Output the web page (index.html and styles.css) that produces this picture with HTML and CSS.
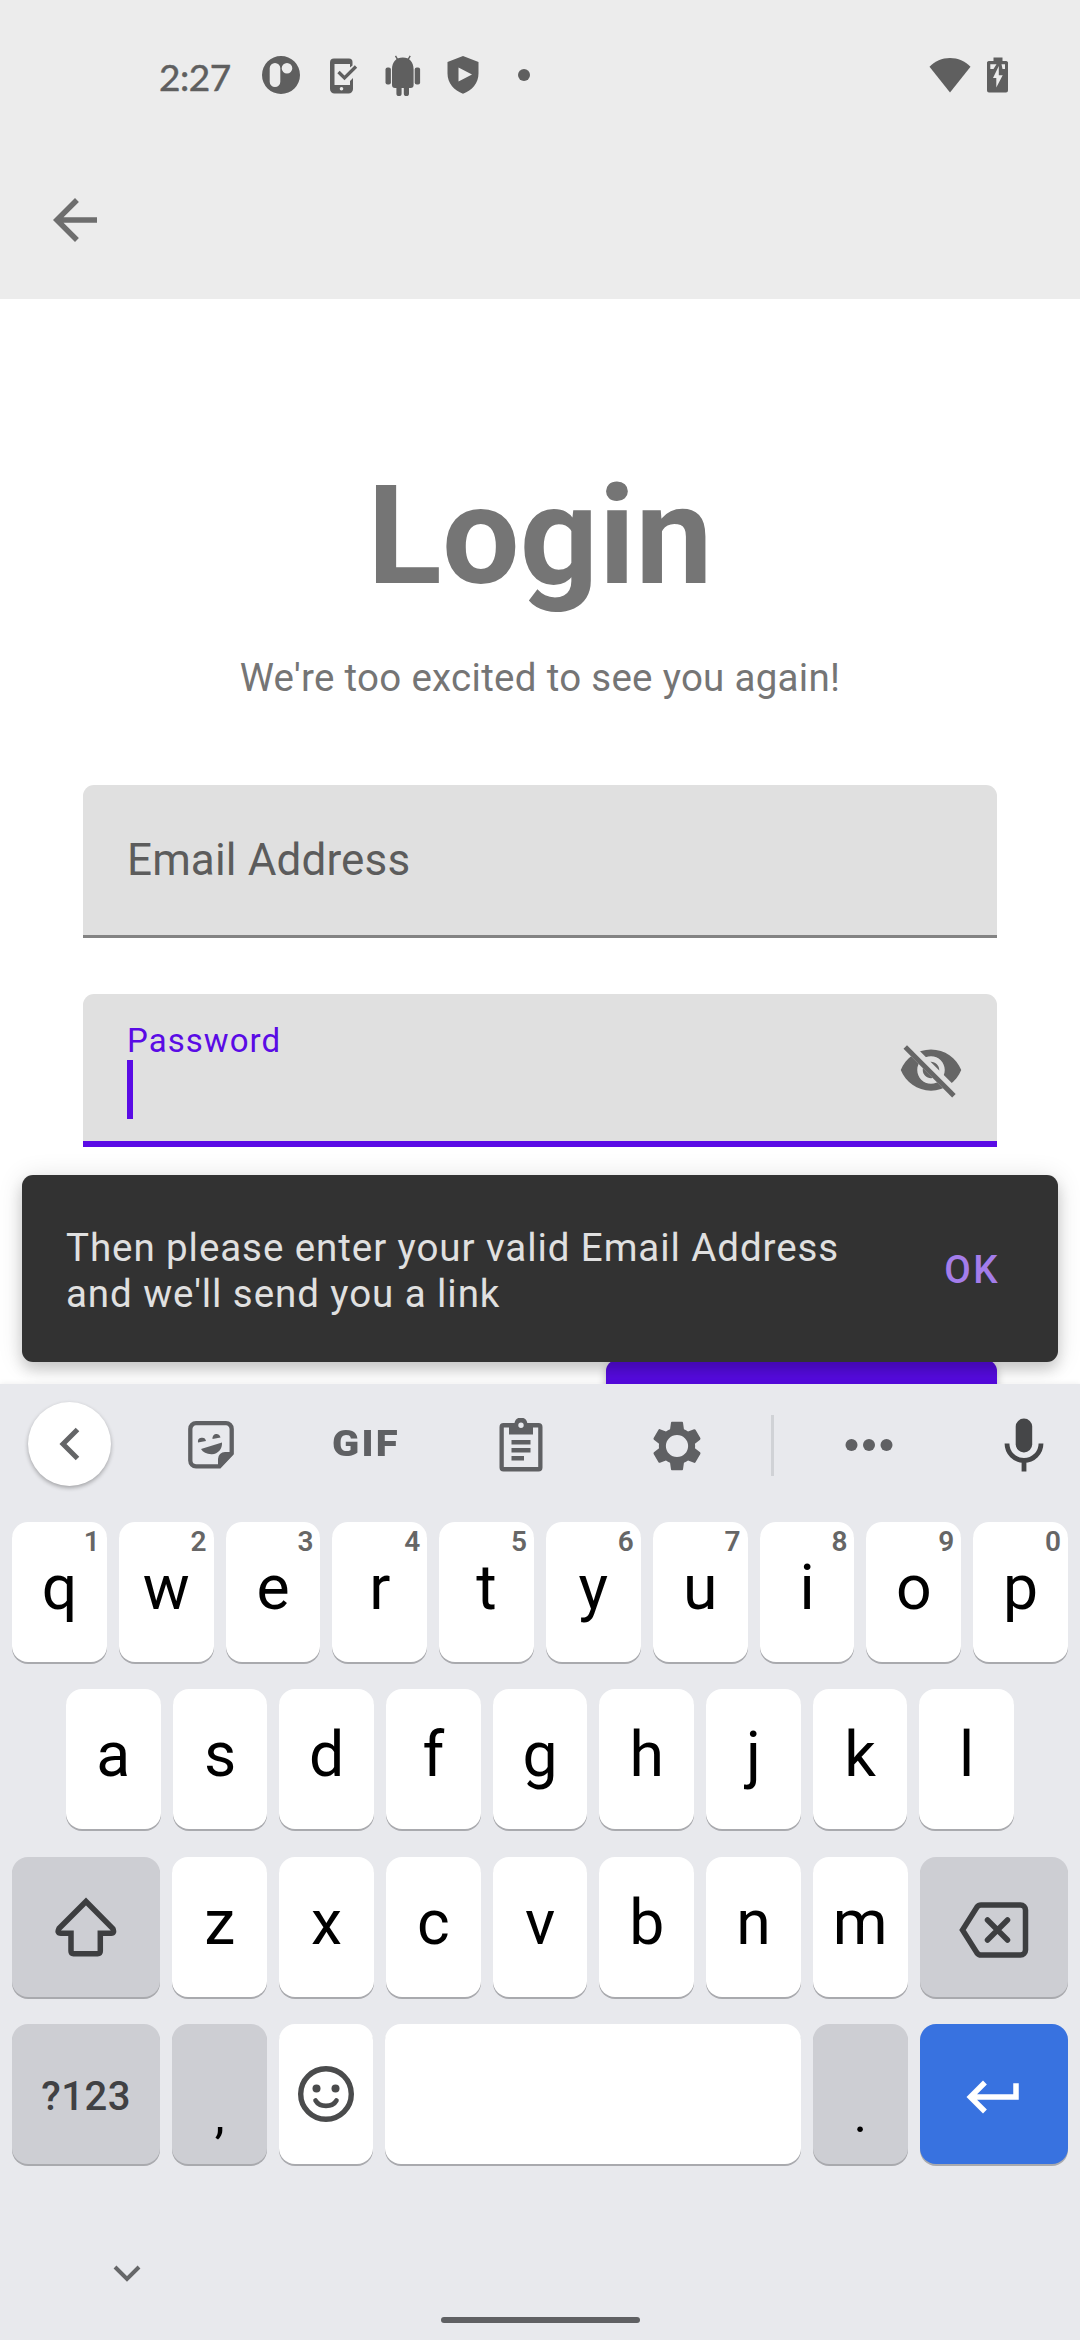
FILE: index.html
```html
<!DOCTYPE html>
<html lang="en">
<head>
<meta charset="utf-8">
<title>Login</title>
<link rel="stylesheet" href="styles.css">
</head>
<body>
<div class="screen">
  <header class="top">
    <div class="status">
      <span class="time">2:27</span>
      <svg class="st-p" width="38" height="38" viewBox="0 0 38 38"><path fill-rule="evenodd" d="M19 0a19 19 0 1 0 0 38a19 19 0 0 0 0-38zM13 7a5.3 5.3 0 0 1 5.3 5.3v13.400a5.3 5.300 0 0 1-10.600 0V12.300A5.300 5.300 0 0 1 13 7zM25 7a5.300 5.300 0 1 1 0 10.600a5.300 5.300 0 0 1 0-10.600z"/></svg>
      <svg class="st-phone" width="28" height="36" viewBox="0 0 28 36"><path fill-rule="evenodd" d="M4 0.500H19a3.500 3.500 0 0 1 3.500 3.500V7.500L20 9.500V6H4.500V27H20V23L23 20V31a4.500 4.500 0 0 1-4.500 4.500H4.500A4.500 4.500 0 0 1 0 31V4.500A4 4 0 0 1 4 .500zM11.500 29a1.800 1.800 0 1 0 0 3.600a1.800 1.800 0 0 0 0-3.600z"/><path d="M8.500 14l6 6L26 8.500" fill="none" stroke="#5f5f5f" stroke-width="3.300"/></svg>
      <svg class="st-android" width="36" height="42" viewBox="0 0 36 42"><path d="M7 14.500C7 7 11 2.500 17.800 2.500S28.600 7 28.600 14.500V30a3 3 0 0 1-3 3H24v5.500a2.600 2.600 0 0 1-5.200 0V33h-2.200v5.500a2.600 2.600 0 0 1-5.200 0V33H10a3 3 0 0 1-3-3z"/><rect x="0.500" y="12.500" width="5.400" height="17" rx="2"/><rect x="29.700" y="12.500" width="5.400" height="17" rx="2"/><path d="M10.500 .800l2.300 4M25.200 .800l-2.300 4" fill="none" stroke="#5f5f5f" stroke-width="1.400"/></svg>
      <svg class="st-shield" width="32" height="38" viewBox="0 0 32 38"><path fill-rule="evenodd" d="M16 0L31.500 6V17.500C31.500 27 25 34.500 16 37.800C7 34.500 .500 27 .500 17.500V6zM11.500 11.500V25.500L25 18.500z"/></svg>
      <span class="st-dot"></span>
      <svg class="st-wifi" width="42" height="36" viewBox="0 0 42 36"><path d="M21 35.500L.500 9.800C6 4 13 1 21 1s15 3 20.500 8.800z"/></svg>
      <svg class="st-batt" width="22" height="36" viewBox="0 0 22 36"><path fill-rule="evenodd" d="M6.500 0.500h9V4H19a2 2 0 0 1 2 2.500V33.500a2 2 0 0 1-2 2H2a2 2 0 0 1-2-2V6.500A2 2 0 0 1 2 4H6.500zM3.300 7.200V12H6.500L9.500 7.200zM14.500 7.200L15.500 12H18V7.200zM11.800 9L6 21h3.300v9.500L15.700 18.200h-3.900z"/></svg>
    </div>
    <svg class="back" width="66" height="66" viewBox="0 0 24 24"><path d="M20 11H7.830l5.590-5.590L12 4l-8 8 8 8 1.410-1.410L7.830 13H20v-2z"/></svg>
  </header>

  <main class="page">
    <h1 class="title">Login</h1>
    <p class="subtitle">We're too excited to see you again!</p>
    <div class="field">
      <span class="hint">Email Address</span>
    </div>
    <div class="field focused">
      <div class="entry">
        <span class="label">Password</span>
        <span class="caret"></span>
      </div>
      <svg class="eye" width="66" height="66" viewBox="0 0 24 24">
        <mask id="cut"><rect width="24" height="24" fill="#fff"/><path d="M-1-1.270L25 24.730" stroke="#000" stroke-width="3.600"/></mask>
        <path mask="url(#cut)" d="M12 4.500C7 4.500 2.730 7.610 1 12c1.730 4.390 6 7.500 11 7.500s9.270-3.110 11-7.500c-1.730-4.390-6-7.500-11-7.500zM12 17c-2.760 0-5-2.240-5-5s2.240-5 5-5 5 2.240 5 5-2.240 5-5 5zM12 9c-1.660 0-3 1.340-3 3s1.340 3 3 3 3-1.340 3-3-1.340-3-3-3z"/>
        <path d="M2.630 3.630L20.330 21.330" stroke="#666" stroke-width="1.800"/>
      </svg>
    </div>
    <div class="submit"></div>
    <div class="snackbar">
      <p class="message">Then please enter your valid Email Address<br>and we'll send you a link</p>
      <span class="action">OK</span>
    </div>
  </main>

  <section class="keyboard">
    <div class="tools">
      <span class="collapse"><svg width="22" height="34" viewBox="0 0 22 34"><path d="M18.500 2.500L4 17L18.500 31.500" fill="none" stroke="#646567" stroke-width="5"/></svg></span>
      <svg class="t-sticker" width="46" height="48" viewBox="0 0 46 48"><path d="M8 2.200H38a5.700 5.700 0 0 1 5.700 5.700V32.500L31.500 45.300H8A5.700 5.700 0 0 1 2.300 39.600V7.900A5.700 5.700 0 0 1 8 2.200z" fill="none" stroke="#5f6063" stroke-width="4.300"/><path d="M45 31H37a7 7 0 0 0-7 7v9h2L45 33.500zM13 28L34 21.500C34.500 28 30 33 24 33.200C19 33.400 15 31.500 13 28zM10 21.500a4 4 0 1 1 8-1.500zM24.500 18a4 4.300 0 1 1 8-1.500z"/></svg>
      <span class="gif">GIF</span>
      <svg class="t-clip" width="44" height="54" viewBox="0 0 44 54"><path fill-rule="evenodd" d="M4.500 5H15.500a6.500 6.500 0 0 1 12.800 0H39.500a4 4 0 0 1 4 4V49.500a4 4 0 0 1-4 4H4.500a4 4 0 0 1-4-4V9a4 4 0 0 1 4-4zM4.800 9.500V49H39.200V9.500H34V16.500H10V9.500zM22 4.500a2.700 2.700 0 1 0 0 5.400a2.700 2.700 0 0 0 0-5.400z"/><path d="M12.500 22h19v4.500h-19zM12.500 30h19v4.500h-19zM12.500 38H25v4.500H12.500z"/></svg>
      <svg class="t-gear" width="58" height="58" viewBox="0 0 24 24"><path d="M19.430 12.980c.040-.320.070-.640.070-.980s-.030-.660-.070-.980l2.110-1.650c.190-.150.240-.420.120-.640l-2-3.460c-.120-.220-.390-.300-.610-.220l-2.490 1c-.520-.400-1.080-.730-1.690-.980l-.380-2.650C14.460 2.180 14.250 2 14 2h-4c-.250 0-.460.180-.490.420l-.380 2.650c-.610.250-1.170.590-1.690.980l-2.490-1c-.230-.090-.490 0-.610.220l-2 3.460c-.130.220-.070.490.120.640l2.110 1.650c-.040.320-.070.650-.070.980s.030.660.070.980l-2.110 1.650c-.190.150-.240.420-.120.640l2 3.460c.120.220.390.300.610.220l2.490-1c.520.400 1.080.730 1.690.980l.380 2.650c.030.240.240.420.490.420h4c.250 0 .460-.180.490-.420l.380-2.650c.610-.250 1.170-.590 1.690-.980l2.490 1c.230.090.490 0 .610-.220l2-3.460c.120-.220.070-.490-.120-.640l-2.110-1.650zM12 16.600a4.600 4.600 0 1 1 0-9.200a4.600 4.600 0 0 1 0 9.200z"/></svg>
      <span class="divider"></span>
      <svg class="t-dots" width="48" height="12" viewBox="0 0 48 12"><circle cx="6.500" cy="6" r="6"/><circle cx="24" cy="6" r="6"/><circle cx="41.500" cy="6" r="6"/></svg>
      <svg class="t-mic" width="40" height="54" viewBox="0 0 40 54"><rect x="11.700" y=".500" width="16.500" height="34" rx="8.200"/><path d="M3 25.500a17 17 0 0 0 34 0M20 42v11.500" fill="none" stroke="#454648" stroke-width="4.800"/></svg>
    </div>

    <div class="row">
      <span class="key">q<i>1</i></span><span class="key">w<i>2</i></span><span class="key">e<i>3</i></span><span class="key">r<i>4</i></span><span class="key">t<i>5</i></span><span class="key">y<i>6</i></span><span class="key">u<i>7</i></span><span class="key">i<i>8</i></span><span class="key">o<i>9</i></span><span class="key">p<i>0</i></span>
    </div>
    <div class="row inset">
      <span class="key">a</span><span class="key">s</span><span class="key">d</span><span class="key">f</span><span class="key">g</span><span class="key">h</span><span class="key">j</span><span class="key">k</span><span class="key">l</span>
    </div>
    <div class="row">
      <span class="key wide"><svg class="k-shift" width="62" height="60" viewBox="0 0 62 60"><path d="M31 4.500L57.800 31.500Q60 36 56 36.300H45.300V54Q45.300 56.700 42.600 56.700H18.500Q16 56.700 16 54V36.300H6Q1.500 36 4 31.500z" fill="none" stroke="#3d3e40" stroke-width="5.500"/></svg></span>
      <span class="key">z</span><span class="key">x</span><span class="key">c</span><span class="key">v</span><span class="key">b</span><span class="key">n</span><span class="key">m</span>
      <span class="key wide"><svg class="k-del" width="70" height="56" viewBox="0 0 70 56"><path d="M22 3H61.500a5 5 0 0 1 5 5V48a5 5 0 0 1-5 5H22Q19.500 53 18 51L3.500 28L18 5Q19.500 3 22 3zM28.500 18L48.500 38M48.500 18L28.500 38" fill="none" stroke="#3d3e40" stroke-width="5.500" stroke-linecap="round"/></svg></span>
    </div>
    <div class="row">
      <span class="key wide sym">?123</span>
      <span class="key gray punct">,</span>
      <span class="key"><svg class="k-emoji" width="58" height="58" viewBox="0 0 58 58"><circle cx="29" cy="29" r="25.300" fill="none" stroke="#4a4b4c" stroke-width="5.400"/><circle cx="19.500" cy="23.500" r="4"/><circle cx="38.500" cy="23.500" r="4"/><path d="M18.500 35.500a11.500 9 0 0 0 21 0" fill="none" stroke="#4a4b4c" stroke-width="4.600" stroke-linecap="round"/></svg></span>
      <span class="key space"></span>
      <span class="key gray punct">.</span>
      <span class="key wide enter"><svg class="k-enter" width="66" height="66" viewBox="0 0 24 24"><path d="M19 7v4H5.830l3.580-3.590L8 6l-6 6 6 6 1.410-1.410L5.830 13H21V7z"/></svg></span>
    </div>

    <div class="nav">
      <svg class="hide" width="28" height="18" viewBox="0 0 28 18"><path d="M2 2L14 14L26 2" fill="none" stroke="#666769" stroke-width="4"/></svg>
      <span class="pill"></span>
    </div>
  </section>
</div>
</body>
</html>
```
FILE: styles.css
```css
* { box-sizing: border-box; }
body { margin: 0; font-family: Roboto, "Liberation Sans", sans-serif; background: #fff; }
h1, p { margin: 0; }
svg { display: block; flex: none; }

.screen { width: 1080px; height: 2340px; display: flex; flex-direction: column; overflow: hidden; }

/* Status and app bar */
.top { height: 299px; background: #ececec; flex: none; }
.status { height: 150px; padding-left: 159px; display: flex; align-items: center; color: #5f5f5f; fill: #5f5f5f; }
.time { width: 103px; font: 400 37px/44px Lato, sans-serif; letter-spacing: -0.5px; -webkit-text-stroke: 0.5px #5f5f5f; margin-top: 4px; }
.st-phone { margin-left: 30px; margin-top: 1px; }
.st-android { margin-left: 27px; margin-top: 1px; }
.st-shield { margin-left: 26px; }
.st-dot { width: 12px; height: 12px; border-radius: 50%; background: #5f5f5f; margin-left: 39px; }
.st-wifi { margin-left: 399px; }
.st-batt { margin-left: 16px; }
.back { margin: 37px 0 0 42px; fill: #6e6e6e; }

/* Login form */
.page { height: 1085px; flex: none; position: relative; overflow: hidden; padding: 157px 83px 0; background: #fff; }
.title { text-align: center; font-size: 137.5px; line-height: 160px; font-weight: 700; letter-spacing: 0.3px; color: #757575; }
.subtitle { margin: 39px 0 84px; text-align: center; font-size: 38.5px; line-height: 46px; letter-spacing: 0.29px; color: #757575; }
.field { height: 153px; margin-bottom: 56px; padding: 0 33px 0 44px; display: flex; background: #e0e0e0; border-radius: 11px 11px 0 0; border-bottom: 3px solid #838383; }
.hint { font-size: 44px; line-height: 150px; letter-spacing: 0.14px; color: #5c5c5c; }
.focused { border-bottom: 6px solid #5a0be5; justify-content: space-between; }
.entry { padding-top: 27px; display: flex; flex-direction: column; }
.label { font-size: 33px; line-height: 39px; letter-spacing: 1.05px; color: #5a0be5; }
.caret { width: 6px; height: 59px; background: #5a0be5; }
.eye { margin-top: 43px; fill: #666; }

.submit { position: absolute; left: 606px; top: 1061px; width: 391px; height: 99px; border-radius: 11px; background: #560be0; box-shadow: 0 3px 8px rgba(0,0,0,.25); }
.snackbar { position: absolute; left: 22px; top: 876px; width: 1036px; height: 187px; padding: 0 58px 0 44px; display: flex; align-items: center; justify-content: space-between; background: #323232; border-radius: 11px; box-shadow: 0 8px 14px rgba(0,0,0,.16), 0 2px 26px rgba(0,0,0,.12); }
.message { font-size: 38.5px; line-height: 46px; letter-spacing: 0.93px; color: #e0e0e0; padding-top: 5px; }
.action { font-size: 38.5px; line-height: 46px; font-weight: 500; letter-spacing: 2.5px; color: #a47dea; padding-top: 3px; }

/* Keyboard */
.keyboard { height: 956px; flex: none; background: #e8e9ed; position: relative; box-shadow: 0 0 6px rgba(0,0,0,.08); }
.tools { height: 138px; padding-left: 28px; display: flex; align-items: center; fill: #5f6063; padding-bottom: 16px; }
.collapse { width: 83px; height: 84px; border-radius: 50%; background: #fff; box-shadow: 0 2px 4px rgba(0,0,0,.3); display: flex; align-items: center; justify-content: center; margin-top: -2px; }
.t-sticker { margin-left: 77px; }
.gif { margin-left: 98px; width: 70px; font-size: 37px; line-height: 40px; font-weight: 900; letter-spacing: 2px; color: #5f6063; margin-top: -2px; transform: scaleX(1.08); transform-origin: left; }
.t-clip { margin-left: 97px; }
.t-gear { margin-left: 105px; margin-top: 2px; }
.divider { margin-left: 65px; width: 3px; height: 61px; background: #d0d2d6; }
.t-dots { margin-left: 71px; }
.t-mic { margin-left: 111px; fill: #454648; }

.row { display: flex; gap: 12px; padding: 0 12px; height: 140px; margin-bottom: 27.3px; }
.inset { padding: 0 66px; }
.key { flex: 1 1 0; position: relative; background: #fff; border-radius: 16px; box-shadow: 0 2px 0 #a9aaae; text-align: center; font-size: 62.5px; line-height: 131px; color: #000; display: flex; justify-content: center; }
.key i { position: absolute; right: 7px; top: 3px; font-style: normal; font-size: 28px; line-height: 34px; font-weight: 600; color: #666; }
.wide { flex: 0 0 148.400px; background: #cdced3; }
.gray { background: #cdced3; }
.space { flex: 0 0 416px; }
.sym { font-size: 40px; line-height: 145px; font-weight: 500; letter-spacing: 0.5px; color: #404144; }
.punct { font-size: 50px; line-height: 182px; }
.enter { background: #3872e0; fill: #fff; }
.k-shift { margin-top: 40px; }
.k-del { margin-top: 45px; }
.k-emoji { margin-top: 41px; fill: #4a4b4c; }
.k-enter { margin-top: 40px; }

/* Navigation strip */
.nav { display: flex; flex-direction: column; height: 149px; }
.hide { margin: 74px 0 0 113px; }
.pill { width: 199px; height: 6px; border-radius: 3px; background: #5f6063; align-self: center; margin-top: 34px; }
```
